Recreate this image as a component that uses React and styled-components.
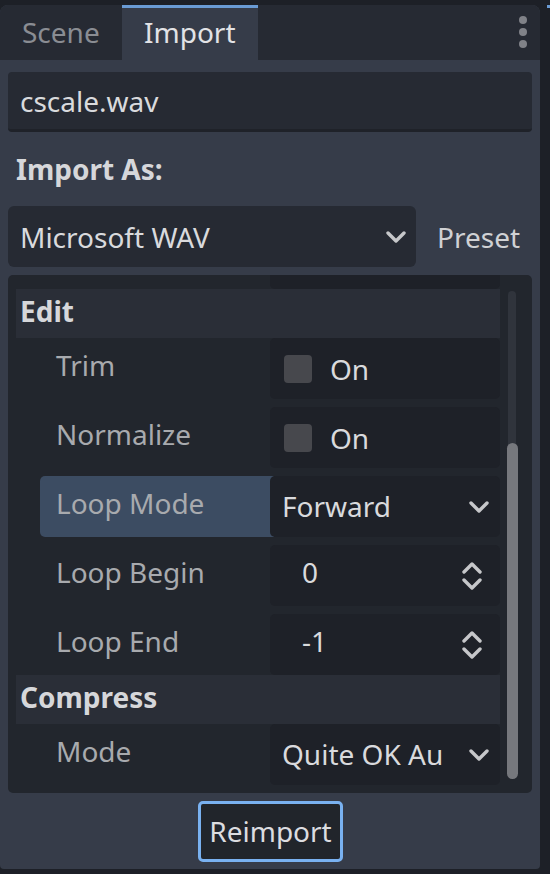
import React from "react";
import styled, { createGlobalStyle } from "styled-components";

const Global = createGlobalStyle`
  html, body { margin: 0; padding: 0; background: #1d2027; }
  body { font-family: "Noto Sans", "Open Sans", sans-serif; }
  * { box-sizing: border-box; }
`;

const Page = styled.div`
  width: 550px;
  height: 874px;
  display: flex;
  background: #1d2027;
  overflow: hidden;
  font-family: "Noto Sans", "Open Sans", sans-serif;
  font-size: 28px;
`;

const Dock = styled.div`
  width: 540px;
  height: 864px;
  margin-top: 5px;
  background: #363c49;
  border-radius: 8px 8px 4px 4px;
  display: flex;
  flex-direction: column;
  overflow: hidden;
`;

const Gutter = styled.div`
  flex: 1;
  display: flex;
  justify-content: flex-end;
  align-items: flex-start;
`;

const GutterTab = styled.div`
  width: 3px;
  height: 3px;
  margin-top: 5px;
  background: #6a9bd4;
`;

const TabBar = styled.div`
  height: 55px;
  flex: none;
  display: flex;
  align-items: stretch;
  background: #262a33;
`;

const Tab = styled.div`
  width: ${(p) => p.$w}px;
  display: flex;
  align-items: center;
  padding-left: ${(p) => p.$pad}px;
  padding-bottom: 4px;
  color: ${(p) => (p.$active ? "#e2e3e6" : "#8a8d93")};
  background: ${(p) => (p.$active ? "#363c49" : "transparent")};
  border-top: 3px solid ${(p) => (p.$active ? "#6a9bd4" : "transparent")};
`;

const TabSpacer = styled.div`
  flex: 1;
`;

const MenuButton = styled.div`
  width: 34px;
  display: flex;
  align-items: center;
  justify-content: flex-start;
  padding-left: 12px;
  padding-bottom: 2px;
`;

const Body = styled.div`
  flex: 1;
  display: flex;
  flex-direction: column;
  padding: 12px 8px 7px 8px;
`;

const FileField = styled.div`
  height: 60px;
  flex: none;
  display: flex;
  align-items: center;
  padding: 0 12px;
  padding-top: 1px;
  background: #262a33;
  border-bottom: 3px solid #1f2229;
  border-radius: 4px;
  color: #d9dadd;
`;

const SectionLabel = styled.div`
  height: 74px;
  flex: none;
  display: flex;
  align-items: center;
  padding-left: 8px;
  font-weight: 700;
  color: #d6d7da;
`;

const TypeRow = styled.div`
  height: 61px;
  flex: none;
  display: flex;
  align-items: stretch;
`;

const Dropdown = styled.div`
  width: 408px;
  display: flex;
  align-items: center;
  justify-content: space-between;
  padding: 0 10px 0 12px;
  background: #262a33;
  border-radius: 6px;
  color: #d9dadd;
`;

const PresetText = styled.div`
  flex: 1;
  display: flex;
  align-items: center;
  padding-left: 21px;
  color: #d0d1d4;
`;

const Inspector = styled.div`
  height: 518px;
  flex: none;
  margin-top: 8px;
  display: flex;
  background: #22262d;
  border-radius: 5px;
  overflow: hidden;
`;

const InspectorContent = styled.div`
  width: 492px;
  padding-left: 8px;
  display: flex;
  flex-direction: column;
`;

const ScrollColumn = styled.div`
  flex: 1;
  display: flex;
  justify-content: flex-start;
  padding: 16px 0 14px 8px;
`;

const ScrollTrack = styled.div`
  width: 8px;
  background: #30343c;
  border-radius: 4px;
  display: flex;
  flex-direction: column;
  justify-content: flex-end;
  align-items: center;
`;

const ScrollGrabber = styled.div`
  width: 11px;
  height: 336px;
  flex: none;
  background: #76787d;
  border-radius: 6px;
`;

const StubRow = styled.div`
  height: 14px;
  flex: none;
  display: flex;
  justify-content: flex-end;
`;

const StubBox = styled.div`
  width: 230px;
  background: #1e2128;
  border-radius: 0 0 5px 5px;
`;

const Header = styled.div`
  height: 49px;
  flex: none;
  display: flex;
  align-items: center;
  padding: 0 0 6px 4px;
  background: #2a2e37;
  font-weight: 700;
  color: #d6d7da;
`;

const PropRow = styled.div`
  height: 61px;
  flex: none;
  display: flex;
  align-items: stretch;
  margin-top: ${(p) => (p.$first ? 0 : 8)}px;
`;

const PropLabel = styled.div`
  flex: 1;
  display: flex;
  align-items: center;
  margin-left: ${(p) => (p.$selected ? 24 : 0)}px;
  margin-right: ${(p) => (p.$selected ? -4 : 0)}px;
  padding-left: ${(p) => (p.$selected ? 16 : 40)}px;
  padding-bottom: 7px;
  background: ${(p) => (p.$selected ? "#3c4c62" : "transparent")};
  border-radius: 5px 0 0 5px;
  color: #a8aaae;
  white-space: nowrap;
`;

const ValueBox = styled.div`
  width: 230px;
  flex: none;
  position: relative;
  display: flex;
  align-items: center;
  justify-content: ${(p) => (p.$start ? "flex-start" : "space-between")};
  background: #1e2128;
  border-radius: 5px;
  color: #d9dadd;
  padding: ${(p) => p.$pad || "0 12px 0 13px"};
`;

const CheckWrap = styled.div`
  display: flex;
  align-items: center;
  gap: 18px;
`;

const CheckBox = styled.div`
  width: 28px;
  height: 28px;
  background: #47484d;
  border-radius: 4px;
`;

const ValueText = styled.span`
  display: block;
  padding-bottom: ${(p) => p.$pb || 0}px;
  white-space: nowrap;
`;

const Footer = styled.div`
  height: 61px;
  flex: none;
  margin-top: 8px;
  display: flex;
  justify-content: center;
`;

const ReimportButton = styled.div`
  width: 145px;
  display: flex;
  align-items: center;
  justify-content: center;
  padding-bottom: 1px;
  background: #21252b;
  border: 3px solid #79b1f0;
  border-radius: 5px;
  color: #dcdde0;
  margin-left: 1px;
`;

const Chevron = () => (
  <svg width="20" height="12" viewBox="0 0 20 12">
    <polyline
      points="2,2 10,10 18,2"
      fill="none"
      stroke="#c6c7ca"
      strokeWidth="3.4"
      strokeLinecap="round"
      strokeLinejoin="round"
    />
  </svg>
);

const Spinner = () => (
  <svg width="20" height="28" viewBox="0 0 20 28">
    <polyline
      points="2,10 10,2 18,10"
      fill="none"
      stroke="#c6c7ca"
      strokeWidth="3.4"
      strokeLinecap="round"
      strokeLinejoin="round"
    />
    <polyline
      points="2,18 10,26 18,18"
      fill="none"
      stroke="#c6c7ca"
      strokeWidth="3.4"
      strokeLinecap="round"
      strokeLinejoin="round"
    />
  </svg>
);

const Dots = () => (
  <svg width="10" height="34" viewBox="0 0 10 34">
    <circle cx="5" cy="5" r="4" fill="#808288" />
    <circle cx="5" cy="17" r="4" fill="#808288" />
    <circle cx="5" cy="29" r="4" fill="#808288" />
  </svg>
);

const CheckValue = () => (
  <ValueBox $pad="0 12px 0 14px" $start>
    <CheckWrap>
      <CheckBox />
      <ValueText>On</ValueText>
    </CheckWrap>
  </ValueBox>
);

const DropValue = ({ text }) => (
  <ValueBox $pad="0 11px 0 12px">
    <ValueText $pb={1}>{text}</ValueText>
    <Chevron />
  </ValueBox>
);

const SpinValue = ({ text }) => (
  <ValueBox $pad="0 18px 0 32px">
    <ValueText $pb={8}>{text}</ValueText>
    <Spinner />
  </ValueBox>
);

export default function App() {
  return (
    <>
      <Global />
      <Page>
        <Dock>
          <TabBar>
            <Tab $w={122} $pad={22}>Scene</Tab>
            <Tab $w={136} $pad={22} $active>
              Import
            </Tab>
            <TabSpacer />
            <MenuButton>
              <Dots />
            </MenuButton>
          </TabBar>
          <Body>
            <FileField>cscale.wav</FileField>
            <SectionLabel>Import As:</SectionLabel>
            <TypeRow>
              <Dropdown>
                <span>Microsoft WAV</span>
                <Chevron />
              </Dropdown>
              <PresetText>Preset</PresetText>
            </TypeRow>
            <Inspector>
              <InspectorContent>
                <StubRow>
                  <StubBox />
                </StubRow>
                <Header>Edit</Header>
                <PropRow $first>
                  <PropLabel>Trim</PropLabel>
                  <CheckValue />
                </PropRow>
                <PropRow>
                  <PropLabel>Normalize</PropLabel>
                  <CheckValue />
                </PropRow>
                <PropRow>
                  <PropLabel $selected>Loop Mode</PropLabel>
                  <DropValue text="Forward" />
                </PropRow>
                <PropRow>
                  <PropLabel>Loop Begin</PropLabel>
                  <SpinValue text="0" />
                </PropRow>
                <PropRow>
                  <PropLabel>Loop End</PropLabel>
                  <SpinValue text="-1" />
                </PropRow>
                <Header>Compress</Header>
                <PropRow $first>
                  <PropLabel>Mode</PropLabel>
                  <DropValue text="Quite OK Au" />
                </PropRow>
              </InspectorContent>
              <ScrollColumn>
                <ScrollTrack>
                  <ScrollGrabber />
                </ScrollTrack>
              </ScrollColumn>
            </Inspector>
            <Footer>
              <ReimportButton>Reimport</ReimportButton>
            </Footer>
          </Body>
        </Dock>
        <Gutter>
          <GutterTab />
        </Gutter>
      </Page>
    </>
  );
}
